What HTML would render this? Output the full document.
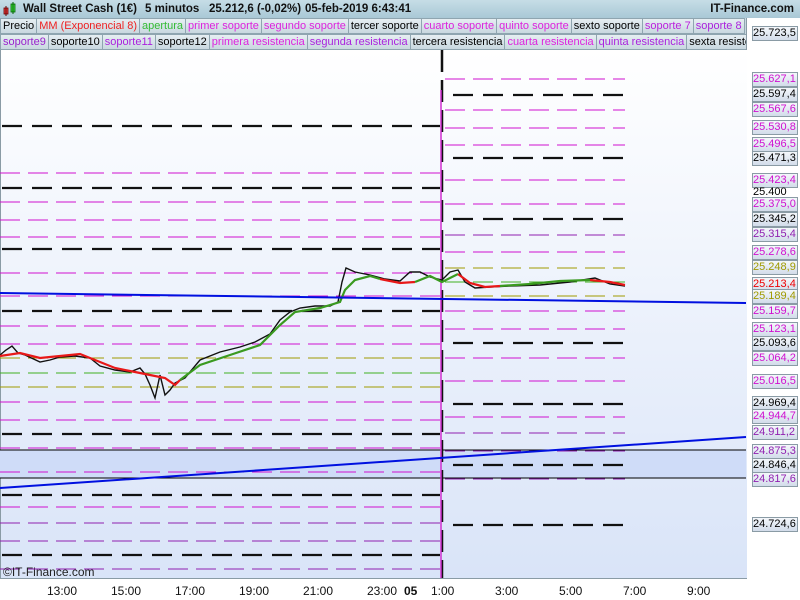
<!DOCTYPE html>
<html><head><meta charset="utf-8"><style>
*{margin:0;padding:0;box-sizing:border-box}
body{width:800px;height:600px;overflow:hidden;background:#fff;font-family:"Liberation Sans",sans-serif;position:relative}
#hdr{position:absolute;left:0;top:0;width:800px;height:18px;background:linear-gradient(#c6dde6,#a9c8d6);font-size:11.5px;font-weight:bold;color:#111;line-height:18px}
.row{position:absolute;left:0;height:16px;width:746px;white-space:nowrap;overflow:hidden;background:#c8d8e0;font-size:11px;line-height:15px}
.row span{display:inline-block;border:1px solid #8fa5b0;background:linear-gradient(#e6eef2,#c9d8e0);padding:0 2px;margin-right:-1px;height:16px}
.lbl{position:absolute;left:752px;width:46px;height:15px;font-size:11px;line-height:13px;text-align:left;padding-left:0;border:1px solid #8a9ba5;background:linear-gradient(#f4f7fb,#d2dcea)}
.xl{position:absolute;top:584px;font-size:12px;color:#111}
</style></head><body>
<div id="hdr">
<svg style="position:absolute;left:3px;top:2px" width="14" height="15"><rect x="1" y="6" width="4" height="6" fill="#e44" stroke="#600" stroke-width=".8"/><line x1="3" y1="4" x2="3" y2="14" stroke="#600"/><rect x="8" y="2" width="4" height="8" fill="#4d4" stroke="#060" stroke-width=".8"/><line x1="10" y1="0" x2="10" y2="12" stroke="#060"/></svg>
<span style="position:absolute;left:23px">Wall Street Cash (1€)</span>
<span style="position:absolute;left:145px">5 minutos</span>
<span style="position:absolute;left:209px">25.212,6 (-0,02%)</span>
<span style="position:absolute;left:305px">05-feb-2019 6:43:41</span>
<span style="position:absolute;right:6px">IT-Finance.com</span>
</div>
<div class="row" style="top:18px"><span>Precio</span><span style="color:#e22">MM (Exponencial 8)</span><span style="color:#3b3">apertura</span><span style="color:#d2d">primer soporte</span><span style="color:#d2d">segundo soporte</span><span>tercer soporte</span><span style="color:#d2d">cuarto soporte</span><span style="color:#d2d">quinto soporte</span><span>sexto soporte</span><span style="color:#b2d">soporte 7</span><span style="color:#a2d">soporte 8</span></div>
<div class="row" style="top:34px"><span style="color:#92c">soporte9</span><span>soporte10</span><span style="color:#a2d">soporte11</span><span>soporte12</span><span style="color:#d2d">primera resistencia</span><span style="color:#a2d">segunda resistencia</span><span>tercera resistencia</span><span style="color:#d2d">cuarta resistencia</span><span style="color:#a2d">quinta resistencia</span><span>sexta resistencia</span></div>
<div style="position:absolute;left:746px;top:18px;width:54px;height:582px;background:#fff;border-left:1px solid #8a9ba5"></div>
<svg style="position:absolute;left:0;top:50px" width="747" height="528">
<defs><linearGradient id="bg" x1="0" y1="0" x2="0" y2="1"><stop offset="0" stop-color="#ffffff"/><stop offset="1" stop-color="#d9e4f8"/></linearGradient></defs>
<rect width="747" height="528" fill="url(#bg)"/>
<line x1="0.5" y1="0" x2="0.5" y2="528" stroke="#8a9ba5"/>
<rect x="0" y="400" width="746" height="28" fill="#cfdcf8"/>
<g stroke-width="1" stroke-dasharray="20,8" fill="none">
<g stroke="#d010d0"><line x1="0" y1="123" x2="440" y2="123"/><line x1="0" y1="152" x2="440" y2="152"/><line x1="0" y1="170" x2="440" y2="170"/><line x1="0" y1="187" x2="440" y2="187"/><line x1="0" y1="223" x2="440" y2="223"/><line x1="0" y1="246" x2="440" y2="246"/><line x1="0" y1="276" x2="440" y2="276"/><line x1="0" y1="294" x2="440" y2="294"/><line x1="0" y1="352" x2="440" y2="352"/><line x1="0" y1="370" x2="440" y2="370"/><line x1="0" y1="398" x2="440" y2="398"/><line x1="0" y1="422" x2="440" y2="422"/><line x1="0" y1="457" x2="440" y2="457"/></g>
<g stroke="#9020b0"><line x1="0" y1="473" x2="440" y2="473"/><line x1="0" y1="491" x2="440" y2="491"/><line x1="0" y1="519" x2="440" y2="519"/></g>
<g stroke="#a09a00"><line x1="0" y1="308" x2="440" y2="308"/><line x1="0" y1="337" x2="440" y2="337"/></g>
<line x1="0" y1="323" x2="440" y2="323" stroke="#40b020"/>
<g stroke="#d010d0"><line x1="445" y1="29" x2="625" y2="29"/><line x1="445" y1="60" x2="625" y2="60"/><line x1="445" y1="78" x2="625" y2="78"/><line x1="445" y1="95" x2="625" y2="95"/><line x1="445" y1="130" x2="625" y2="130"/><line x1="445" y1="154" x2="625" y2="154"/><line x1="445" y1="202" x2="625" y2="202"/><line x1="445" y1="261" x2="625" y2="261"/><line x1="445" y1="279" x2="625" y2="279"/><line x1="445" y1="308" x2="625" y2="308"/><line x1="445" y1="331" x2="625" y2="331"/><line x1="445" y1="367" x2="625" y2="367"/></g>
<g stroke="#9020b0"><line x1="445" y1="185" x2="625" y2="185"/><line x1="445" y1="383" x2="625" y2="383"/><line x1="445" y1="401" x2="625" y2="401"/><line x1="445" y1="429" x2="625" y2="429"/></g>
<g stroke="#a09a00"><line x1="445" y1="218" x2="625" y2="218"/><line x1="445" y1="246" x2="625" y2="246"/></g>
<line x1="445" y1="232" x2="625" y2="232" stroke="#40b020"/>
</g>
<g stroke="#111" stroke-width="2.2" stroke-dasharray="20,10" fill="none">
<line x1="2" y1="76" x2="440" y2="76"/><line x1="2" y1="138" x2="440" y2="138"/><line x1="2" y1="199" x2="440" y2="199"/><line x1="2" y1="261" x2="440" y2="261"/><line x1="2" y1="384" x2="440" y2="384"/><line x1="2" y1="445" x2="440" y2="445"/><line x1="2" y1="505" x2="440" y2="505"/>
<line x1="453" y1="45" x2="625" y2="45"/><line x1="453" y1="108" x2="625" y2="108"/><line x1="453" y1="169" x2="625" y2="169"/><line x1="453" y1="293" x2="625" y2="293"/><line x1="453" y1="354" x2="625" y2="354"/><line x1="453" y1="415" x2="625" y2="415"/><line x1="453" y1="475" x2="625" y2="475"/>
</g>
<line x1="0" y1="400" x2="746" y2="400" stroke="#000"/><line x1="0" y1="428" x2="746" y2="428" stroke="#000"/>
<line x1="442" y1="0" x2="442" y2="528" stroke="#111" stroke-width="2.5" stroke-dasharray="22,8"/>
<line x1="441" y1="40" x2="441" y2="528" stroke="#d030d0" stroke-width="1.5"/>
<polyline fill="none" stroke="#111" stroke-width="1.4" points="0,305 6,300 12,296 18,303 25,305 40,312 50,310 60,307 75,306 90,308 100,316 115,320 130,322 140,318 145,324 150,335 155,348 160,325 165,345 170,340 175,333 185,328 200,310 220,302 240,297 255,292 270,284 280,270 290,262 300,258 315,256 330,256 338,252 342,232 346,218 355,222 370,225 385,229 400,231 410,222 420,222 430,227 442,230 450,222 458,220 465,232 475,238 490,237 510,236 540,235 570,232 595,228 610,234 625,236"/>
<polyline fill="none" stroke="#e81818" stroke-width="2.2" points="0,306 20,303 40,308 60,306 80,304 95,310 115,318 135,322 150,325 165,328 175,335 180,330"/>
<polyline fill="none" stroke="#3a9a20" stroke-width="2.2" points="180,330 200,315 230,305 260,295 280,275 295,262 320,258 340,252 345,240 355,230 370,226 380,229"/>
<polyline fill="none" stroke="#e81818" stroke-width="2.2" points="380,229 400,233 415,232"/>
<polyline fill="none" stroke="#3a9a20" stroke-width="2.2" points="415,232 430,226 442,232 450,228 458,224"/>
<polyline fill="none" stroke="#e81818" stroke-width="2.2" points="458,224 470,233 485,237 500,236"/>
<polyline fill="none" stroke="#3a9a20" stroke-width="2.2" points="500,236 530,234 560,231 590,230"/>
<polyline fill="none" stroke="#e81818" stroke-width="2.2" points="590,230 610,232 625,235"/>
<line x1="0" y1="243" x2="746" y2="253" stroke="#0010e0" stroke-width="2"/>
<line x1="0" y1="438" x2="746" y2="387" stroke="#0010e0" stroke-width="2"/>
<text x="3" y="526" font-size="12" font-family="Liberation Sans" fill="#222">©IT-Finance.com</text>
</svg>
<div style="position:absolute;left:0;top:578px;width:747px;height:22px;background:#fff;border-top:1px solid #8a9ba5"></div>
<div class="xl" style="left:47px">13:00</div><div class="xl" style="left:111px">15:00</div><div class="xl" style="left:175px">17:00</div><div class="xl" style="left:239px">19:00</div><div class="xl" style="left:303px">21:00</div><div class="xl" style="left:367px">23:00</div><div class="xl" style="left:404px;font-weight:bold">05</div><div class="xl" style="left:431px">1:00</div><div class="xl" style="left:495px">3:00</div><div class="xl" style="left:559px">5:00</div><div class="xl" style="left:623px">7:00</div><div class="xl" style="left:687px">9:00</div>
<div class="lbl" style="top:26px;color:#000">25.723,5</div>
<div class="lbl" style="top:72px;color:#d010d0">25.627,1</div>
<div class="lbl" style="top:87px;color:#000">25.597,4</div>
<div class="lbl" style="top:102px;color:#d010d0">25.567,6</div>
<div class="lbl" style="top:120px;color:#d010d0">25.530,8</div>
<div class="lbl" style="top:137px;color:#d010d0">25.496,5</div>
<div class="lbl" style="top:151px;color:#000">25.471,3</div>
<div class="lbl" style="top:173px;color:#d010d0">25.423,4</div>
<div style="position:absolute;left:753px;top:186px;font-size:11px">25.400</div>
<div class="lbl" style="top:197px;color:#d010d0">25.375,0</div>
<div class="lbl" style="top:212px;color:#000">25.345,2</div>
<div class="lbl" style="top:227px;color:#9020b0">25.315,4</div>
<div class="lbl" style="top:245px;color:#d010d0">25.278,6</div>
<div class="lbl" style="top:260px;color:#a09a00">25.248,9</div>
<div class="lbl" style="top:277px;color:#e00">25.213,4</div>
<div class="lbl" style="top:289px;color:#a09a00">25.189,4</div>
<div class="lbl" style="top:304px;color:#d010d0">25.159,7</div>
<div class="lbl" style="top:322px;color:#d010d0">25.123,1</div>
<div class="lbl" style="top:336px;color:#000">25.093,6</div>
<div class="lbl" style="top:351px;color:#d010d0">25.064,2</div>
<div class="lbl" style="top:374px;color:#d010d0">25.016,5</div>
<div class="lbl" style="top:396px;color:#000">24.969,4</div>
<div class="lbl" style="top:409px;color:#d010d0">24.944,7</div>
<div class="lbl" style="top:425px;color:#9020b0">24.911,2</div>
<div class="lbl" style="top:444px;color:#9020b0">24.875,3</div>
<div class="lbl" style="top:458px;color:#000">24.846,4</div>
<div class="lbl" style="top:472px;color:#9020b0">24.817,6</div>
<div class="lbl" style="top:517px;color:#000">24.724,6</div>
</body></html>
